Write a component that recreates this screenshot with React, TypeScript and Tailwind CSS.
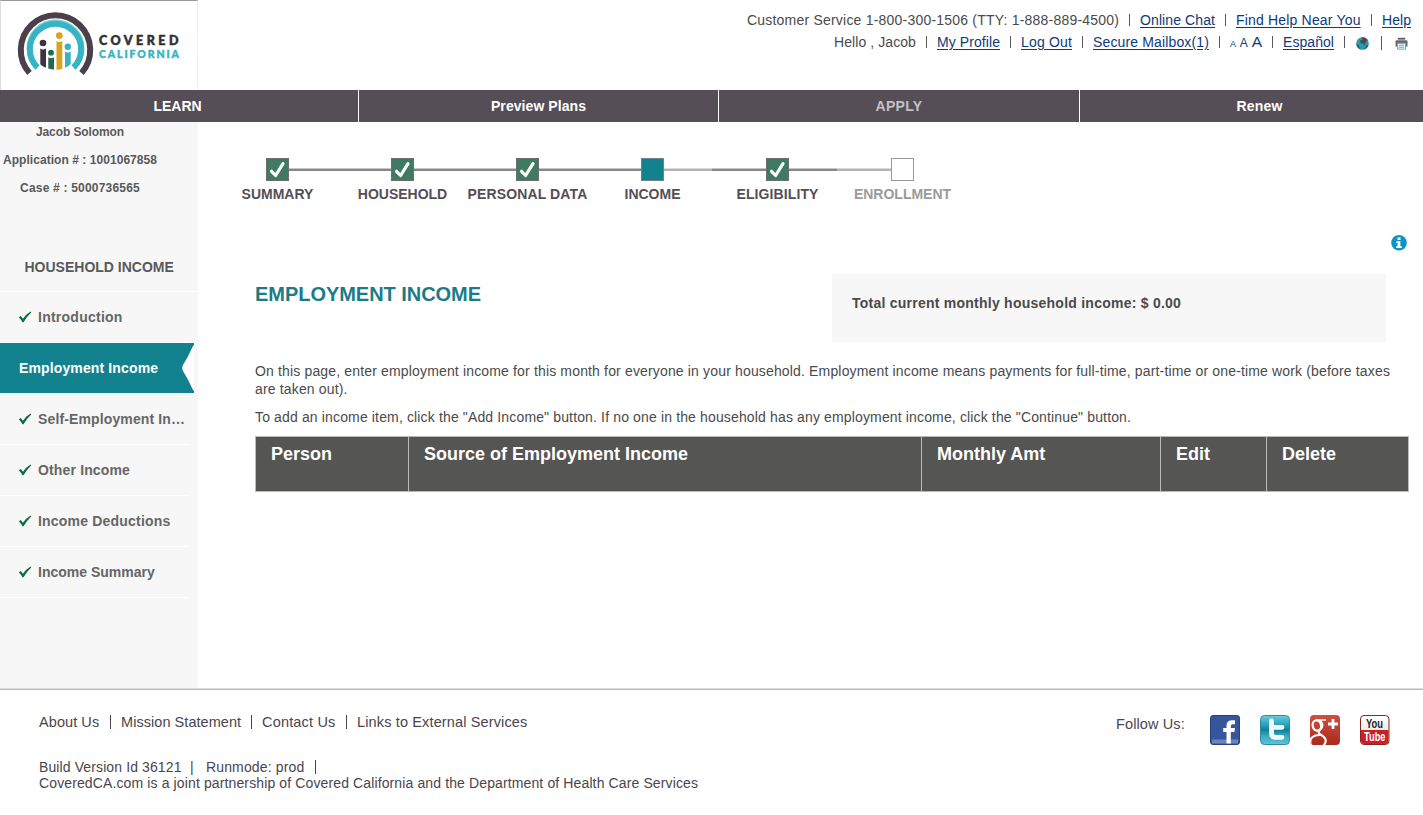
import type { ReactNode } from "react";

function Logo() {
  return (
    <svg width="196" height="88" viewBox="1 1 196 88" className="block">
      <path d="M29.5 73 A34.7 34.7 0 1 1 81.5 73" fill="none" stroke="#4b3f49" strokeWidth="6" />
      <path d="M36.2 68.5 A28 28 0 1 1 74.8 68.5" fill="none" stroke="#8ed3dc" strokeWidth="2" />
      <path d="M37.5 67.5 A25.6 25.6 0 1 1 73.5 67.5" fill="none" stroke="#35b4c4" strokeWidth="6" />
      <circle cx="43" cy="43" r="3.3" fill="#3d3440" />
      <path d="M40.3 48.6 q2.8 2 5.7 0 v19.2 q-3.6 -1.2 -5.7 -3.6z" fill="#3d3440" />
      <circle cx="51" cy="52.7" r="2.9" fill="#1f6b4c" />
      <path d="M48.3 57.2 q2.8 2 5.7 0 v12.3 q-3 0 -5.7 -1.1z" fill="#1f6b4c" />
      <circle cx="59.3" cy="35.6" r="3.4" fill="#d9a520" />
      <path d="M56.5 40.9 q2.9 2 5.8 0 v28 q-3 1 -5.8 .8z" fill="#d9a520" />
      <circle cx="67.8" cy="46.8" r="3.2" fill="#35b4c4" />
      <path d="M65 51.6 q2.9 2 5.7 0 v12.6 q-2.4 2.2 -5.7 3.6z" fill="#35b4c4" />
      <text x="98.9" y="45.2" textLength="79.500" lengthAdjust="spacing" fill="#332d33" stroke="#332d33" strokeWidth=".5" className="font-['Lato',sans-serif] text-[12.500px] font-black">COVERED</text>
      <text x="98.9" y="57.7" textLength="80" lengthAdjust="spacing" fill="#35b4c4" stroke="#35b4c4" strokeWidth=".4" className="font-['Lato',sans-serif] text-[10.500px] font-black">CALIFORNIA</text>
    </svg>
  );
}

function Sep() {
  return <span className="mx-[10px] h-[12px] w-px shrink-0 bg-[#5a5a5a]" />;
}

function Link({ className, children }: { className: string; children: ReactNode }) {
  return (
    <a href="#" className={`shrink-0 whitespace-nowrap text-[#0d3a7a] underline underline-offset-2 ${className}`}>
      {children}
    </a>
  );
}

function Globe() {
  return (
    <svg width="13" height="13" viewBox="0 0 13 13" className="ml-px">
      <circle cx="6.5" cy="6.5" r="6.3" fill="#1fa0ac" />
      <path d="M5 .5 Q9 -.6 11.4 2.6 Q12 4 10 4.6 L9.6 6 L8.4 8.4 L7.4 6.8 L4.6 6.2 L4 3.8 L6.6 2.4z" fill="#514a55" />
      <path d="M.3 7 L2.6 8 L3.6 10 L4.6 12.5 Q1 11.300 .3 7z M10.600 8 L12.500 8 Q11.500 11.500 8 12.700z" fill="#3f5a66" />
    </svg>
  );
}

function Printer() {
  return (
    <svg width="13" height="13" viewBox="0 0 13 13">
      <path d="M2.800 .8 h7.400 v1.800 h-7.400z" fill="#5d5962" />
      <path d="M0.500 4.500 q0 -1.200 1.200 -1.200 h9.600 q1.200 0 1.200 1.200 v5 h-12z" fill="#6a6770" />
      <path d="M2.500 6.300 h8 v5.900 h-8z" fill="#eaf8f8" stroke="#4fb0b6" strokeWidth=".9" />
      <path d="M4 8.300 h5 M4 10.300 h5" stroke="#4fb0b6" strokeWidth=".9" />
    </svg>
  );
}

function SideCheck() {
  return (
    <svg width="14" height="12" viewBox="0 0 14 12" className="ml-[18px] mr-[6px] shrink-0">
      <path d="M.8 6.200 L2.800 5 L5 7.700 Q8 3.300 12.600 .6 L13.200 1.400 Q8.800 5.400 5.500 11.300 L4.500 11.300 Q3 8.400 .8 6.200z" fill="#0c6b41" />
    </svg>
  );
}

const sideItems: { label: string; tracking: string; active?: boolean }[] = [
  { label: "Introduction", tracking: "tracking-[0.25px]" },
  { label: "Employment Income", tracking: "tracking-[0.13px]", active: true },
  { label: "Self-Employment In…", tracking: "tracking-[0.13px]" },
  { label: "Other Income", tracking: "tracking-[0.15px]" },
  { label: "Income Deductions", tracking: "tracking-[0.2px]" },
  { label: "Income Summary", tracking: "tracking-[0px]" },
];

type Step = { label: string; state: "done" | "current" | "todo"; left: string; right: string; tracking?: string };
const dark = "bg-[#8a858a] border-[#c9c5c9]";
const light = "bg-[#b3b1b3] border-[#dcdadc]";
const steps: Step[] = [
  { label: "SUMMARY", state: "done", left: "invisible", right: dark },
  { label: "HOUSEHOLD", state: "done", left: dark, right: dark },
  { label: "PERSONAL DATA", state: "done", left: dark, right: dark, tracking: "tracking-[0.12px]" },
  { label: "INCOME", state: "current", left: dark, right: light },
  { label: "ELIGIBILITY", state: "done", left: dark, right: dark, tracking: "tracking-[0.1px]" },
  { label: "ENROLLMENT", state: "todo", left: light, right: "invisible" },
];

function StepBox({ state }: { state: Step["state"] }) {
  if (state === "done")
    return (
      <span className="flex size-[23px] shrink-0 items-center justify-center border border-[#6b6f6b] bg-[#3f7a63]">
        <svg width="21" height="21" viewBox="0 0 21 21">
          <path d="M4.500 12.300 L8.600 16.500 L16 4.600" fill="none" stroke="#fff" strokeWidth="3.200" strokeLinecap="round" strokeLinejoin="round" />
        </svg>
      </span>
    );
  if (state === "current") return <span className="size-[23px] shrink-0 border border-[#6c8288] bg-[#13828f]" />;
  return <span className="size-[23px] shrink-0 border border-[#999] bg-white" />;
}

function Stepper() {
  return (
    <ol className="ml-[14px] flex pt-[36px]">
      {steps.map((s) => (
        <li key={s.label} className="w-[125px]">
          <div className="flex h-[23px] items-center">
            <span className={`-mt-px h-[3px] w-[54px] border-t ${s.left}`} />
            <StepBox state={s.state} />
            <span className={`-mt-px h-[3px] w-[48px] border-t ${s.right}`} />
          </div>
          <div className={`ml-[6px] mt-[4px] flex justify-center whitespace-nowrap text-[14px] font-bold leading-[18px] ${s.state === "todo" ? "text-[#9b9b9b]" : "text-[#554e55]"} ${s.tracking ?? ""}`}>
            {s.label}
          </div>
        </li>
      ))}
    </ol>
  );
}

const columns: { label: string; width: string }[] = [
  { label: "Person", width: "w-[153px]" },
  { label: "Source of Employment Income", width: "w-[513px]" },
  { label: "Monthly Amt", width: "w-[239px]" },
  { label: "Edit", width: "w-[106px]" },
  { label: "Delete", width: "w-[142px]" },
];

function Facebook() {
  return (
    <svg width="30" height="30" viewBox="0 0 30 30">
      <rect x=".5" y=".5" width="29" height="29" rx="2.500" fill="#36559b" stroke="#27427f" />
      <rect x="2" y="24.500" width="26" height="4" fill="#6c86bd" />
      <path d="M16.500 28.500 V17 h-3.300 v-4 h3.300 v-2.500 Q16.500 5.500 21.500 5.300 h3.500 v4 h-2.200 q-2 0 -2 2 V13 h4.200 l-.6 4 h-3.600 v11.500z" fill="#fff" />
    </svg>
  );
}

function Twitter() {
  return (
    <svg width="30" height="30" viewBox="0 0 30 30">
      <defs>
        <linearGradient id="tw" x1="0" y1="0" x2="0" y2="1">
          <stop offset="0" stopColor="#6fcadb" />
          <stop offset=".28" stopColor="#2da9c1" />
          <stop offset=".5" stopColor="#127f99" />
          <stop offset=".7" stopColor="#37a9c0" />
          <stop offset="1" stopColor="#5fc5d6" />
        </linearGradient>
      </defs>
      <rect x=".5" y=".5" width="29" height="29" rx="4" fill="url(#tw)" stroke="#348a9b" />
      <path d="M11.500 6 V18 Q11.500 22.300 15.500 22.300 H22 M11.500 12.300 H22" fill="none" stroke="#f2f9fa" strokeWidth="4.800" strokeLinecap="round" strokeLinejoin="round" />
    </svg>
  );
}

function GooglePlus() {
  return (
    <svg width="30" height="30" viewBox="0 0 30 30">
      <defs>
        <linearGradient id="gp" x1="0" y1="0" x2="0" y2="1">
          <stop offset="0" stopColor="#d0503f" />
          <stop offset="1" stopColor="#a92a1e" />
        </linearGradient>
        <clipPath id="gpc"><rect width="30" height="30" rx="4" /></clipPath>
      </defs>
      <rect width="30" height="30" rx="4" fill="url(#gp)" />
      <g clipPath="url(#gpc)" fill="none" stroke="#fff">
        <ellipse cx="6.800" cy="10.500" rx="4.200" ry="5.200" strokeWidth="2.300" transform="rotate(-14 7 10.300)" />
        <path d="M6 5 H16 M9.500 5.500 Q13.500 8 12.500 11.500 Q12 13.500 10 15" strokeWidth="1.500" />
        <path d="M10 15 Q7 17.500 10.500 19.500 Q15.500 22.500 15.800 25.500 Q15.800 28.500 13 31 M10.500 20 Q4.500 19.500 1.500 23 Q-.5 26 1 31" strokeWidth="2.100" />
        <path d="M23 4 V14 M18 9 H28" strokeWidth="2.800" />
      </g>
    </svg>
  );
}

function YouTube() {
  return (
    <svg width="30" height="30" viewBox="0 0 30 30" className="overflow-visible">
      <defs>
        <linearGradient id="yt" x1="0" y1="0" x2="0" y2="1">
          <stop offset="0" stopColor="#ffffff" />
          <stop offset="1" stopColor="#d9d7d7" />
        </linearGradient>
      </defs>
      <rect x=".5" y=".5" width="28.500" height="29" rx="3.500" fill="url(#yt)" stroke="#8a2522" />
      <path d="M1 15 H28.500 V26 Q28.500 29 25.500 29 H4 Q1 29 1 26z" fill="#cb2027" />
      <text x="6" y="13" textLength="17" lengthAdjust="spacingAndGlyphs" fill="#222" className="font-['Liberation_Sans',sans-serif] text-[12px] font-bold">You</text>
      <text x="4" y="26" textLength="21.500" lengthAdjust="spacingAndGlyphs" fill="#fff" className="font-['Liberation_Sans',sans-serif] text-[12px] font-bold">Tube</text>
    </svg>
  );
}

export default function App() {
  return (
    <div className="flex h-[815px] w-full flex-col overflow-hidden bg-white font-['Liberation_Sans',Arial,sans-serif] text-[14px] text-[#4a4a4a]">
      <header className="flex h-[90px] shrink-0 justify-between">
        <div className="h-[90px] w-[198px] border border-b-0 border-t-[#999] border-l-[#ddd] border-r-[#eee]">
          <Logo />
        </div>
        <div className="flex flex-col pt-[9px] leading-[22px]">
          <div className="flex h-[22px] items-center justify-end pr-[12px]">
            <span className="w-[372px] whitespace-nowrap tracking-[0.208px]">Customer Service 1-800-300-1506 (TTY: 1-888-889-4500)</span>
            <Sep />
            <Link className="w-[75px] tracking-[0.1px]">Online Chat</Link>
            <Sep />
            <Link className="w-[125px] tracking-[0.18px]">Find Help Near You</Link>
            <Sep />
            <Link className="w-[29px] tracking-[0.05px]">Help</Link>
          </div>
          <div className="flex h-[22px] items-center justify-end pr-[15px]">
            <span className="w-[82px] whitespace-nowrap tracking-[0.08px]">Hello , Jacob</span>
            <Sep />
            <Link className="w-[63px] tracking-[0.08px]">My Profile</Link>
            <Sep />
            <Link className="w-[51px] tracking-[0.17px]">Log Out</Link>
            <Sep />
            <Link className="w-[116px] tracking-[0.14px]">Secure Mailbox(1)</Link>
            <Sep />
            <span className="flex h-[22px] w-[32px] items-baseline justify-between text-[#0d3a7a]">
              <span className="text-[9px]">A</span>
              <span className="text-[12px]">A</span>
              <span className="text-[15.500px]">A</span>
            </span>
            <Sep />
            <Link className="w-[51px] tracking-[0.06px]">Español</Link>
            <Sep />
            <span className="flex items-center pt-[2px]">
              <Globe />
              <span className="ml-[12px] mr-[13px] h-[14px] w-px bg-[#5a5a5a]" />
              <Printer />
            </span>
          </div>
        </div>
      </header>

      <nav className="flex h-[32px] shrink-0 bg-[#554e56] text-center font-bold leading-[32px] text-white">
        <div className="w-[359px] shrink-0 border-r border-white pr-[3px]">LEARN</div>
        <div className="w-[360px] shrink-0 border-r border-white tracking-[0.07px]">Preview Plans</div>
        <div className="w-[361px] shrink-0 border-r border-white tracking-[0.35px] text-[#c4c0c4]">APPLY</div>
        <div className="w-[359px] shrink-0 tracking-[0.19px]">Renew</div>
      </nav>

      <div className="flex h-[566px] shrink-0">
        <aside className="w-[198px] shrink-0 bg-[#f7f7f7] font-bold text-[#58595b]">
          <div className="flex w-[160px] flex-col items-center gap-2 whitespace-nowrap text-[12px] leading-[20px]">
            <div className="tracking-[-0.1px]">Jacob Solomon</div>
            <div className="tracking-[0.05px]">Application # : 1001067858</div>
            <div className="tracking-[0.2px]">Case # : 5000736565</div>
          </div>
          <h2 className="mt-[44px] h-[50px] border-b border-white pl-[24.500px] leading-[50px]">HOUSEHOLD INCOME</h2>
          <ul className="text-[#666]">
            {sideItems.map((i) =>
              i.active ? (
                <li key={i.label} className={`flex h-[51px] items-start text-white ${i.tracking}`}>
                  <div className="flex h-[50px] w-[194px] items-center justify-between bg-[#13828f]">
                    <span className="pl-[19px]">{i.label}</span>
                    <svg width="12" height="50" viewBox="0 0 12 50">
                      <path d="M12 2 L10.500 4 Q6 14 1 22 Q-.5 25 1 28 Q6 36 10.500 46 L12 48z" fill="#fff" />
                    </svg>
                  </div>
                </li>
              ) : (
                <li key={i.label} className={`flex h-[51px] w-[189px] items-center whitespace-nowrap border-b border-white ${i.tracking}`}>
                  <SideCheck />
                  {i.label}
                </li>
              ),
            )}
          </ul>
        </aside>

        <main className="flex flex-1 flex-col">
          <Stepper />
          <div className="mt-[32px] flex h-[17px] justify-end pr-[16px]">
            <svg width="16" height="16" viewBox="0 0 16 16">
              <circle cx="8" cy="7.800" r="7.800" fill="#0e94c4" />
              <path d="M6.500 2.400 h3 v2.600 h-3z M5.400 6.200 h4 v5 h1.400 v1.700 h-5.600 v-1.700 h1.400 v-3.300 h-1.200z" fill="#fff" />
            </svg>
          </div>
          <div className="mt-[22px] flex justify-between pl-[57px] pr-[37px]">
            <h1 className="pt-[8px] text-[20px] font-bold leading-[24px] tracking-[-0.04px] text-[#1b7c87]">EMPLOYMENT INCOME</h1>
            <div className="h-[68px] w-[554px] bg-[#f7f7f7] pl-[20px] pt-[19px] font-bold leading-[20px] tracking-[0.244px]">
              Total current monthly household income: $ 0.00
            </div>
          </div>
          <div className="mt-[20px] whitespace-nowrap pl-[57px] leading-[18px]">
            <p className="tracking-[0.156px]">
              On this page, enter employment income for this month for everyone in your household. Employment income means payments for full-time, part-time or one-time work (before taxes
              <br />
              are taken out).
            </p>
            <p className="mt-[10px] tracking-[0.144px]">
              To add an income item, click the "Add Income" button. If no one in the household has any employment income, click the "Continue" button.
            </p>
          </div>
          <table className="ml-[57px] mt-[10px] h-[56px] w-[1154px] table-fixed border-collapse bg-[#555553] text-left text-[18px] leading-[22px] text-white">
            <thead>
              <tr>
                {columns.map((c) => (
                  <th key={c.label} className={`${c.width} border border-[#bbb] pl-[15px] pt-[6px] align-top font-bold`}>
                    {c.label}
                  </th>
                ))}
              </tr>
            </thead>
          </table>
        </main>
      </div>

      <footer className="flex-1 border-t border-[#dcdcdc] pt-px text-[#4a454d] shadow-[inset_0_1px_0_#b8b8b8]">
        <div className="flex h-[58px] justify-between pl-[39px] pr-[33px]">
          <div className="flex items-center self-start whitespace-nowrap pt-[22px] text-[14.500px] leading-[20px]">
            <span className="w-[61px] tracking-[0.07px]">About Us</span>
            <span className="mx-[10px] -mt-px h-[14px] w-px bg-[#4a454d]" />
            <span className="w-[120px] tracking-[0.05px]">Mission Statement</span>
            <span className="mx-[10px] -mt-px h-[14px] w-px bg-[#4a454d]" />
            <span className="w-[74px] tracking-[0.18px]">Contact Us</span>
            <span className="mx-[10px] -mt-px h-[14px] w-px bg-[#4a454d]" />
            <span className="tracking-[0.14px]">Links to External Services</span>
          </div>
          <div className="flex items-start pt-[25px]">
            <span className="mr-[25px] w-[69px] whitespace-nowrap text-[14.500px] leading-[18px] tracking-[0.12px]">Follow Us:</span>
            <div className="flex gap-5">
              <Facebook />
              <Twitter />
              <GooglePlus />
              <YouTube />
            </div>
          </div>
        </div>
        <div className="mt-[11px] pl-[39px] leading-[16px]">
          <div className="flex items-center whitespace-nowrap">
            <span className="w-[151px] tracking-[0.11px]">Build Version Id 36121</span>
            <span className="w-[16px]">|</span>
            <span className="w-[109px] tracking-[0.14px]">Runmode: prod</span>
            <span className="-mt-px h-[14px] w-px bg-[#4a454d]" />
          </div>
          <div className="tracking-[0.123px]">CoveredCA.com is a joint partnership of Covered California and the Department of Health Care Services</div>
        </div>
      </footer>
    </div>
  );
}
